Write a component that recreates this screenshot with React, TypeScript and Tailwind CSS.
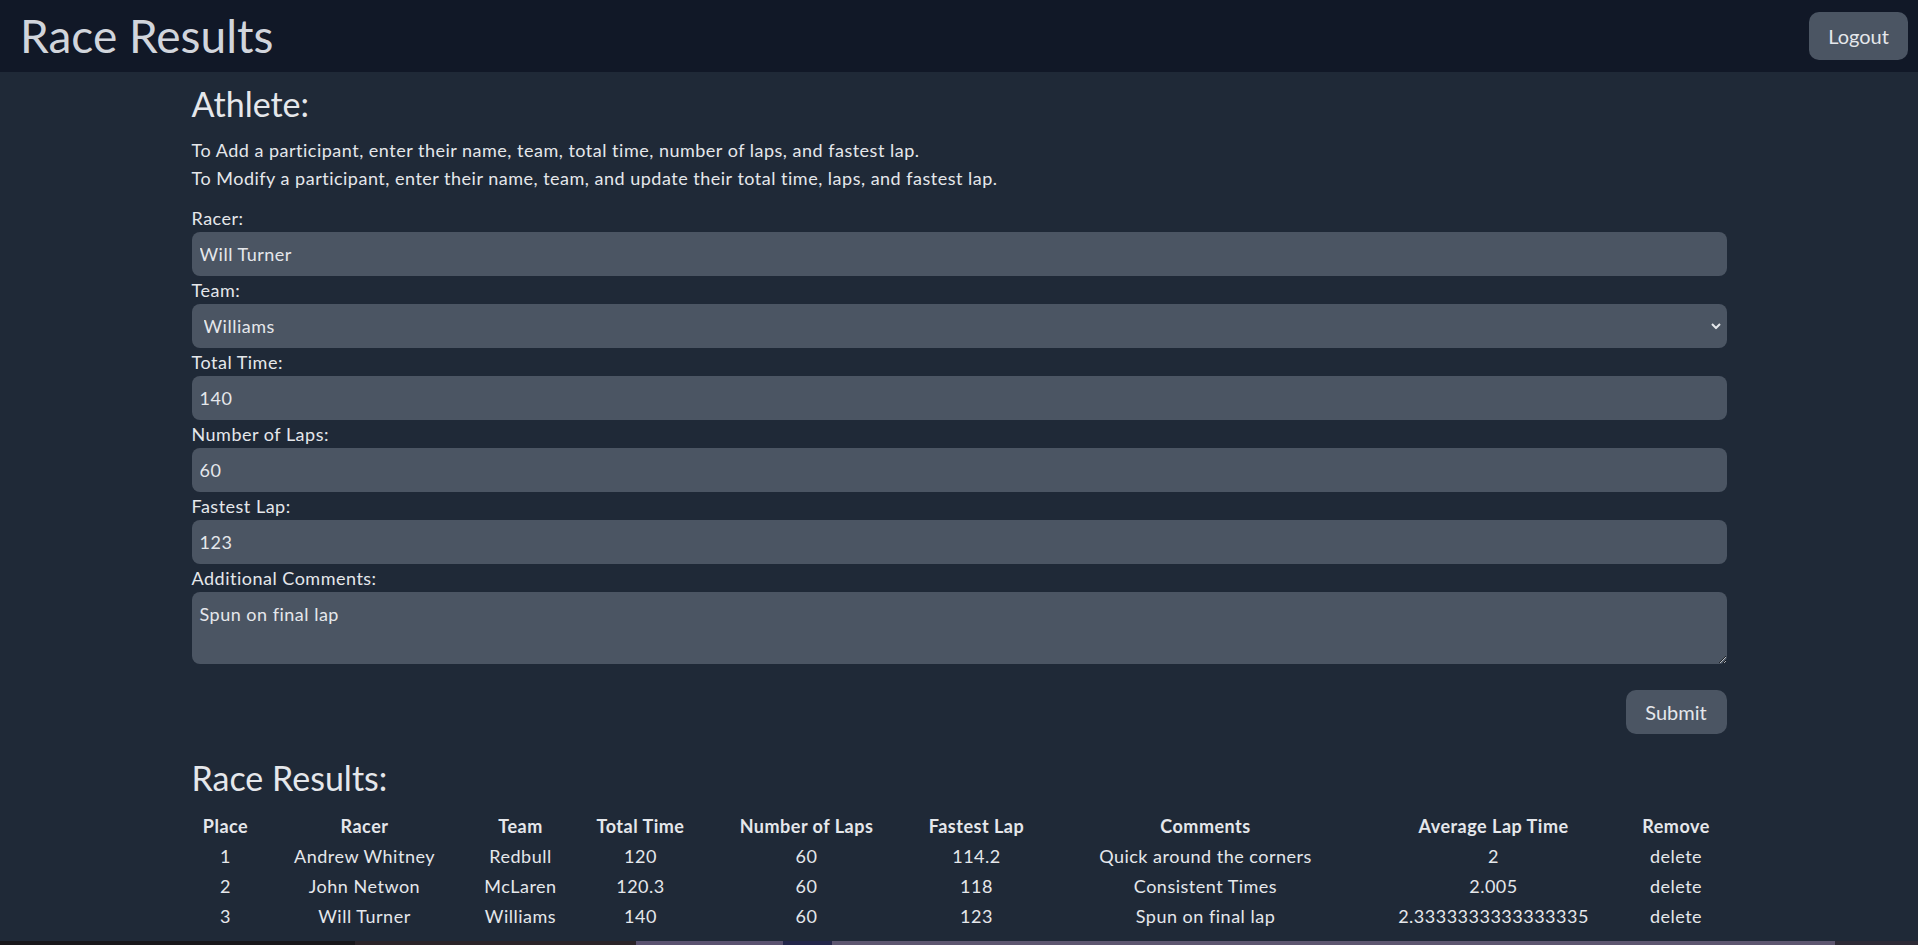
import React from "react";

const rows = [
  { place: 1, racer: "Andrew Whitney", team: "Redbull", total: "120", laps: "60", fastest: "114.2", comments: "Quick around the corners", avg: "2" },
  { place: 2, racer: "John Netwon", team: "McLaren", total: "120.3", laps: "60", fastest: "118", comments: "Consistent Times", avg: "2.005" },
  { place: 3, racer: "Will Turner", team: "Williams", total: "140", laps: "60", fastest: "123", comments: "Spun on final lap", avg: "2.3333333333333335" },
];

const inputCls =
  "block w-full h-[44px] rounded-lg bg-[#4b5563] px-2 text-lg leading-7 tracking-[0.5px] text-gray-200 outline-none";

export default function App() {
  return (
    <div
      className="flex h-screen flex-col bg-[#1f2937] text-gray-200"
      style={{ fontFamily: "Lato, 'Noto Sans', sans-serif" }}
    >
      <header className="flex h-[72px] shrink-0 items-center justify-between bg-[#111827] pl-[20px] pr-[10px]">
        <h1 className="text-[46px] leading-none text-gray-300">Race Results</h1>
        <button className="h-[48px] w-[99px] rounded-[10px] bg-[#4b5563] text-xl text-gray-200">Logout</button>
      </header>

      <main className="flex-1">
        <div className="mx-auto w-[1535px]">
          <h2 className="mt-3 h-10 text-[34px] leading-10 text-gray-200">Athlete:</h2>
          <div className="mt-3 text-lg leading-7 tracking-[0.5px]">
            <p>To Add a participant, enter their name, team, total time, number of laps, and fastest lap.</p>
            <p>To Modify a participant, enter their name, team, and update their total time, laps, and fastest lap.</p>
          </div>

          <form className="mt-3 flex flex-col text-lg leading-7 tracking-[0.5px]" onSubmit={(e) => e.preventDefault()}>
            <label className="block h-7">Racer:</label>
            <input className={inputCls} defaultValue="Will Turner" />

            <label className="block h-7">Team:</label>
            <div className="relative">
              <select className={inputCls + " appearance-none pl-3"} defaultValue="Williams">
                <option>Redbull</option>
                <option>McLaren</option>
                <option>Williams</option>
              </select>
              <svg
                className="pointer-events-none absolute right-[6px] top-1/2 -translate-y-1/2"
                width="10"
                height="7"
                viewBox="0 0 10 7"
              >
                <path d="M1 1.5 L5 5.5 L9 1.5" fill="none" stroke="#e5e7eb" strokeWidth="2" />
              </svg>
            </div>

            <label className="block h-7">Total Time:</label>
            <input className={inputCls} defaultValue="140" />

            <label className="block h-7">Number of Laps:</label>
            <input className={inputCls} defaultValue="60" />

            <label className="block h-7">Fastest Lap:</label>
            <input className={inputCls} defaultValue="123" />

            <label className="block h-7">Additional Comments:</label>
            <textarea
              className="block h-[72px] w-full rounded-lg bg-[#4b5563] px-2 py-2 text-lg leading-7 tracking-[0.5px] text-gray-200 outline-none"
              defaultValue="Spun on final lap"
            />

            <div className="mt-[26px] flex justify-end">
              <button type="submit" className="h-[44px] w-[101px] rounded-[10px] bg-[#4b5563] text-xl tracking-normal text-gray-200">
                Submit
              </button>
            </div>
          </form>

          <h2 className="mt-6 h-10 text-[34px] leading-10 text-gray-200">Race Results:</h2>

          <table className="mt-[13px] w-full table-fixed text-center text-lg leading-7 tracking-[0.5px]">
            <colgroup>
              <col className="w-[68px]" />
              <col className="w-[210px]" />
              <col className="w-[102px]" />
              <col className="w-[138px]" />
              <col className="w-[194px]" />
              <col className="w-[146px]" />
              <col className="w-[312px]" />
              <col className="w-[264px]" />
              <col className="w-[101px]" />
            </colgroup>
            <thead>
              <tr>
                <th className="py-px font-bold">Place</th>
                <th className="py-px font-bold">Racer</th>
                <th className="py-px font-bold">Team</th>
                <th className="py-px font-bold">Total Time</th>
                <th className="py-px font-bold">Number of Laps</th>
                <th className="py-px font-bold">Fastest Lap</th>
                <th className="py-px font-bold">Comments</th>
                <th className="py-px font-bold">Average Lap Time</th>
                <th className="py-px font-bold">Remove</th>
              </tr>
            </thead>
            <tbody>
              {rows.map((r) => (
                <tr key={r.place}>
                  <td className="py-px">{r.place}</td>
                  <td className="py-px">{r.racer}</td>
                  <td className="py-px">{r.team}</td>
                  <td className="py-px">{r.total}</td>
                  <td className="py-px">{r.laps}</td>
                  <td className="py-px">{r.fastest}</td>
                  <td className="py-px">{r.comments}</td>
                  <td className="py-px">{r.avg}</td>
                  <td className="py-px">delete</td>
                </tr>
              ))}
            </tbody>
          </table>
        </div>
      </main>

      <div className="flex h-[4px] shrink-0">
        <div className="w-[355px] bg-[#18171b]" />
        <div className="w-[281px] bg-[#2b2429]" />
        <div className="w-[147px] bg-[#5a5270]" />
        <div className="w-[49px] bg-[#23264a]" />
        <div className="flex-1 bg-[#5d5670]" />
        <div className="w-[83px] bg-[#2d2a36]" />
      </div>
    </div>
  );
}
